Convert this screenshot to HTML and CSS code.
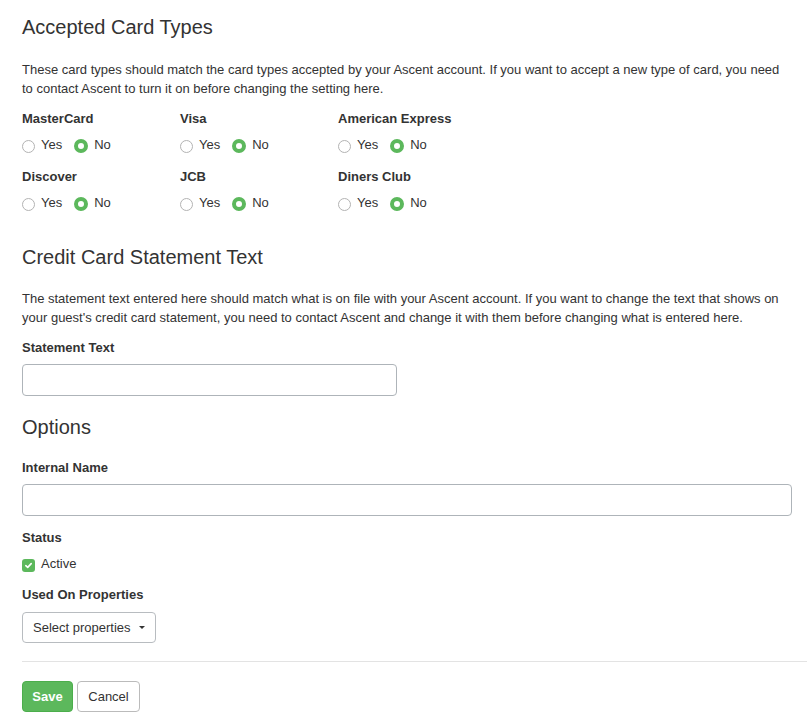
FILE: index.html
```html
<!DOCTYPE html>
<html lang="en">

<head>
    <meta charset="UTF-8">
    <title>Payment Settings</title>
    <link rel="stylesheet" href="styles.css">
</head>

<body>
    <div class="container">
        <h3 class="section-title">Accepted Card Types</h3>
        <p class="help">These card types should match the card types accepted by your Ascent account. If you want to accept a new type of card, you need to contact Ascent to turn it on before changing the setting here.</p>

        <div class="card-grid">
            <div class="card-group">
                <div class="label">MasterCard</div>
                <div class="radios">
                    <label class="radio"><span class="radio-dot"></span>Yes</label>
                    <label class="radio"><span class="radio-dot checked"></span>No</label>
                </div>
            </div>
            <div class="card-group">
                <div class="label">Visa</div>
                <div class="radios">
                    <label class="radio"><span class="radio-dot"></span>Yes</label>
                    <label class="radio"><span class="radio-dot checked"></span>No</label>
                </div>
            </div>
            <div class="card-group">
                <div class="label">American Express</div>
                <div class="radios">
                    <label class="radio"><span class="radio-dot"></span>Yes</label>
                    <label class="radio"><span class="radio-dot checked"></span>No</label>
                </div>
            </div>
            <div class="card-group">
                <div class="label">Discover</div>
                <div class="radios">
                    <label class="radio"><span class="radio-dot"></span>Yes</label>
                    <label class="radio"><span class="radio-dot checked"></span>No</label>
                </div>
            </div>
            <div class="card-group">
                <div class="label">JCB</div>
                <div class="radios">
                    <label class="radio"><span class="radio-dot"></span>Yes</label>
                    <label class="radio"><span class="radio-dot checked"></span>No</label>
                </div>
            </div>
            <div class="card-group">
                <div class="label">Diners Club</div>
                <div class="radios">
                    <label class="radio"><span class="radio-dot"></span>Yes</label>
                    <label class="radio"><span class="radio-dot checked"></span>No</label>
                </div>
            </div>
        </div>

        <h3 class="section-title second">Credit Card Statement Text</h3>
        <p class="help">The statement text entered here should match what is on file with your Ascent account. If you want to change the text that shows on your guest's credit card statement, you need to contact Ascent and change it with them before changing what is entered here.</p>

        <div class="field">
            <div class="label">Statement Text</div>
            <input class="input-field short" type="text">
        </div>

        <h3 class="section-title third">Options</h3>

        <div class="field">
            <div class="label">Internal Name</div>
            <input class="input-field" type="text">
        </div>

        <div class="field">
            <div class="label">Status</div>
            <label class="check">
                <span class="check-box">
                    <svg width="9" height="9" viewBox="0 0 9 9"><path d="M1.8 4.7 L3.7 6.4 L7.2 2.6" fill="none" stroke="#fff" stroke-width="1.6" stroke-linecap="round" stroke-linejoin="round"/></svg>
                </span>Active
            </label>
        </div>

        <div class="field">
            <div class="label">Used On Properties</div>
            <button class="btn btn-select">Select properties <span class="caret"></span></button>
        </div>

        <hr class="divider">

        <div class="actions">
            <button class="btn btn-save">Save</button>
            <button class="btn btn-cancel">Cancel</button>
        </div>
    </div>
</body>

</html>
```

FILE: styles.css
```css
body {
    margin: 0;
    font-family: "Liberation Sans", Arial, sans-serif;
    font-size: 13px;
    line-height: 18.5px;
    color: #333;
    background: #fff;
    overflow: hidden;
}

.container {
    padding: 16px 15px 0 22px;
}

.section-title {
    margin: 0;
    font-size: 20px;
    font-weight: normal;
    line-height: 22px;
}

.section-title.second {
    margin-top: 34px;
}

.section-title.third {
    margin-top: 20px;
}

.help {
    margin: 23px 0 11px;
    color: #333;
}

.section-title.second + .help {
    margin-top: 22px;
    margin-bottom: 12px;
}

.label {
    font-weight: bold;
    line-height: 18px;
    margin-bottom: 7px;
}

.card-grid {
    display: grid;
    grid-template-columns: 158px 158px 158px;
    row-gap: 14px;
    padding-top: 1px;
}

.radios {
    display: flex;
    gap: 12px;
    line-height: 18px;
    margin-top: 8px;
}

.card-group .label {
    margin-bottom: 0;
}

.radio {
    display: flex;
    align-items: center;
}

.radio-dot {
    box-sizing: border-box;
    width: 13px;
    height: 13px;
    border: 1px solid #b3b3b3;
    border-radius: 50%;
    margin: 2px 6px 0 0;
    background: #fff;
}

.radio-dot.checked {
    border: 4px solid #5cb85c;
    width: 14px;
    height: 14px;
}

.field {
    margin-top: 13px;
}

.help + .field {
    margin-top: 12px;
}

.section-title + .field {
    margin-top: 21px;
}

.input-field {
    display: block;
    box-sizing: border-box;
    width: 770px;
    height: 32px;
    border: 1px solid #aeb4b9;
    border-radius: 4px;
    padding: 6px 12px;
    font: inherit;
}

.input-field.short {
    width: 375px;
}

.check {
    display: flex;
    align-items: center;
    line-height: 18px;
    margin-top: 8px;
}

.check-box {
    display: flex;
    align-items: center;
    justify-content: center;
    width: 13px;
    height: 13px;
    border-radius: 3px;
    background: #5cb85c;
    margin: 3px 6px 0 0;
}

.btn {
    box-sizing: border-box;
    font-family: inherit;
    font-size: 13px;
    line-height: 18px;
    border-radius: 4px;
    padding: 6px 10px;
    cursor: pointer;
}

.btn-select {
    height: 31px;
    width: 134px;
    padding: 5px 10px;
    text-align: left;
    background: #fff;
    color: #333;
    border: 1px solid #b8bcc0;
    display: flex;
    align-items: center;
    justify-content: space-between;
    margin-top: 8px;
}

.caret {
    width: 0;
    height: 0;
    border-left: 3px solid transparent;
    border-right: 3px solid transparent;
    border-top: 3px solid #333;
}

.divider {
    border: 0;
    border-top: 1px solid #e3e3e3;
    margin: 18px -15px 19px 0;
}

.actions {
    display: flex;
    gap: 4px;
}

.btn-save {
    height: 31px;
    width: 51px;
    background: #5cb85c;
    border: 1px solid #4cae4c;
    color: #fff;
    font-weight: bold;
    padding: 0;
}

.btn-cancel {
    height: 31px;
    width: 63px;
    background: #fff;
    border: 1px solid #bbb;
    color: #333;
    padding: 0;
}
```
